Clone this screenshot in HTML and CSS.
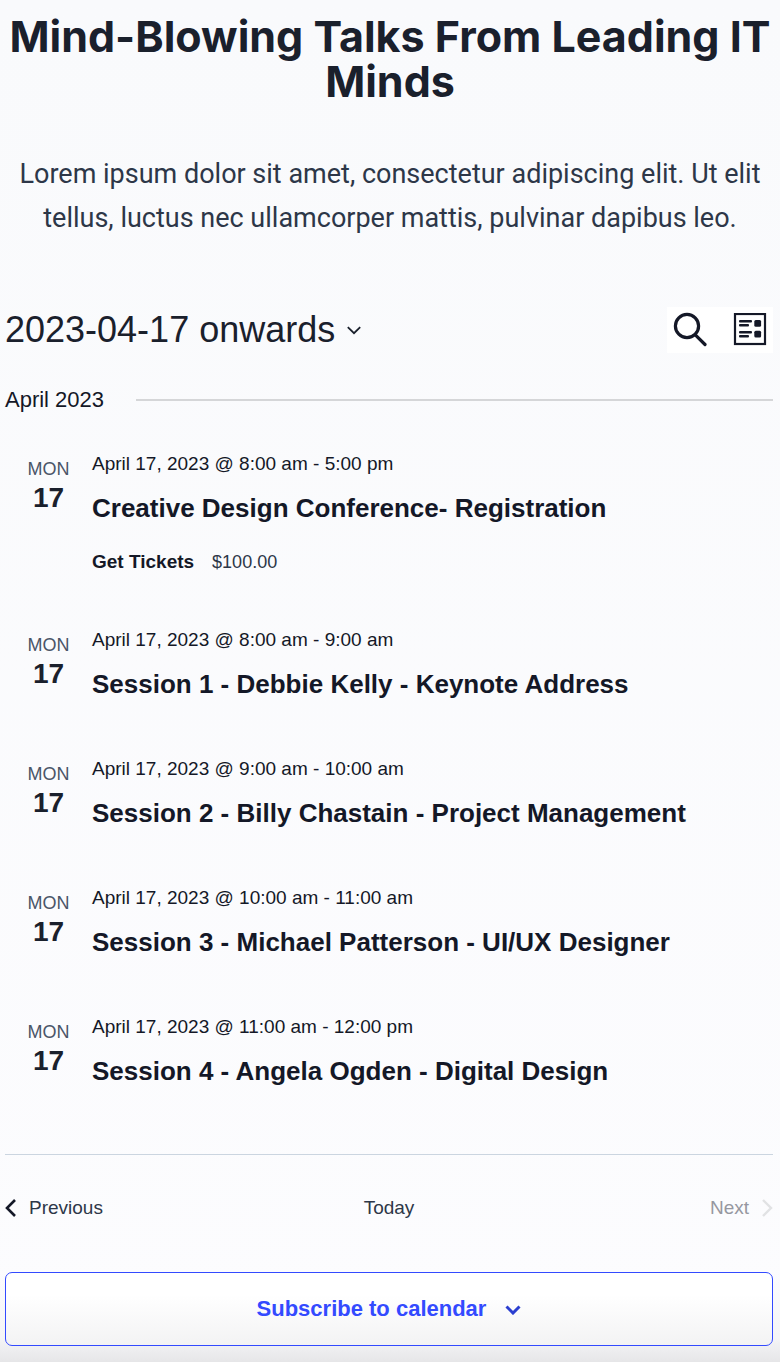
FILE: index.html
```html
<!DOCTYPE html>
<html lang="en">
    <head>
        <meta charset="UTF-8" />
        <meta name="viewport" content="width=device-width, initial-scale=1" />
        <title>Events</title>
        <link rel="stylesheet" href="styles.css">
    </head>
    <body>
        <header class="intro">
            <h1>Mind-Blowing Talks From Leading IT Minds</h1>
            <p>Lorem ipsum dolor sit amet, consectetur adipiscing elit. Ut elit tellus, luctus nec ullamcorper mattis, pulvinar dapibus leo.</p>
        </header>
        <main class="events">
            <div class="top_bar">
                <button type="button" class="datepicker">
                    2023-04-17 onwards
                    <svg width="14" height="9" viewBox="0 0 14 9" fill="none" stroke="currentColor" stroke-width="1.8"><path d="M.8 1.2L7 7.2l6.2-6"/></svg>
                </button>
                <div class="views">
                    <button type="button" class="view_button" aria-label="Search">
                        <svg width="34" height="36" viewBox="0 0 34 36" fill="none" stroke="currentColor"><circle cx="14" cy="14" r="11.6" stroke-width="3.2"/><path d="M22.3 22.8l9.7 9.7" stroke-width="3.2" stroke-linecap="round"/></svg>
                    </button>
                    <button type="button" class="view_button" aria-label="List view">
                        <svg width="34" height="34" viewBox="0 0 34 34" fill="currentColor"><rect x="2" y="1" width="30" height="30" fill="none" stroke="currentColor" stroke-width="2.2"/><rect x="6" y="7" width="13" height="2.4" rx="1"/><rect x="6" y="11" width="10" height="2.4" rx="1"/><rect x="6" y="18" width="13" height="2.4" rx="1"/><rect x="6" y="22" width="10" height="2.4" rx="1"/><rect x="21.3" y="7" width="6.8" height="6.8" rx="1.5"/><rect x="21.3" y="17.8" width="6.8" height="6.8" rx="1.5"/></svg>
                    </button>
                </div>
            </div>

            <h2 class="month">April 2023</h2>

            <article class="event">
                <div class="date_tag"><span class="weekday">MON</span><span class="day">17</span></div>
                <div class="details">
                    <time class="when">April 17, 2023 @ 8:00 am - 5:00 pm</time>
                    <h3><a href="#">Creative Design Conference- Registration</a></h3>
                    <p class="cost"><a href="#">Get Tickets</a><span>$100.00</span></p>
                </div>
            </article>
            <article class="event">
                <div class="date_tag"><span class="weekday">MON</span><span class="day">17</span></div>
                <div class="details">
                    <time class="when">April 17, 2023 @ 8:00 am - 9:00 am</time>
                    <h3><a href="#">Session 1 - Debbie Kelly - Keynote Address</a></h3>
                </div>
            </article>
            <article class="event">
                <div class="date_tag"><span class="weekday">MON</span><span class="day">17</span></div>
                <div class="details">
                    <time class="when">April 17, 2023 @ 9:00 am - 10:00 am</time>
                    <h3><a href="#">Session 2 - Billy Chastain - Project Management</a></h3>
                </div>
            </article>
            <article class="event">
                <div class="date_tag"><span class="weekday">MON</span><span class="day">17</span></div>
                <div class="details">
                    <time class="when">April 17, 2023 @ 10:00 am - 11:00 am</time>
                    <h3><a href="#">Session 3 - Michael Patterson - UI/UX Designer</a></h3>
                </div>
            </article>
            <article class="event">
                <div class="date_tag"><span class="weekday">MON</span><span class="day">17</span></div>
                <div class="details">
                    <time class="when">April 17, 2023 @ 11:00 am - 12:00 pm</time>
                    <h3><a href="#">Session 4 - Angela Ogden - Digital Design</a></h3>
                </div>
            </article>

            <nav class="pager">
                <a href="#" class="previous"><svg width="11" height="18" viewBox="0 0 11 18" fill="none" stroke="#141827" stroke-width="2.6"><path d="M10 1L2 9l8 8"/></svg>Previous</a>
                <a href="#" class="today">Today</a>
                <button type="button" class="next" disabled>Next<svg width="11" height="18" viewBox="0 0 11 18" fill="none" stroke="#e1e2e4" stroke-width="2.4"><path d="M1 1l8 8-8 8"/></svg></button>
            </nav>

            <button type="button" class="subscribe">
                Subscribe to calendar
                <svg width="16" height="11" viewBox="0 0 16 11" fill="none" stroke="#2b3fd0" stroke-width="3"><path d="M1.5 2.5L8 9l6.5-6.5"/></svg>
            </button>
        </main>
    </body>
</html>
```

FILE: styles.css
```css
* {
    box-sizing: border-box;
}
body {
    margin: 0;
    min-height: 100vh;
    /* shade along the bottom edge, over the page tint */
    background: linear-gradient(to top, #e6e6e8, rgba(240,240,242,0.6) 24px, rgba(250,250,252,0) 90px), linear-gradient(#f9fafc, #fcfcfe);
    color: #141827;
    font-family: "Helvetica Neue", "Liberation Sans", Arial, sans-serif;
}
h1, h2, h3, p {
    margin: 0;
}
a {
    color: inherit;
    text-decoration: none;
}
button {
    padding: 0;
    border: 0;
    background: none;
    color: inherit;
    font: inherit;
    cursor: pointer;
}
svg {
    display: block;
    flex: none;
}

.intro {
    padding: 14px 8px 0;
    font-family: Inter, sans-serif;
    text-align: center;
}
.intro h1 {
    color: #1a202c;
    font-size: 43px;
    font-weight: 700;
    line-height: 45px;
}
.intro p {
    margin-top: 48px;
    color: #2d3748;
    font-family: Roboto, sans-serif;
    font-size: 27px;
    line-height: 44px;
}

.events {
    padding: 67px 7px 16px 5px;
}
.top_bar {
    display: flex;
    justify-content: space-between;
    align-items: center;
}
.datepicker {
    display: flex;
    align-items: center;
    gap: 12px;
    color: #1a202c;
    font-size: 36px;
    line-height: 46px;
}
.views {
    display: flex;
    align-items: center;
    gap: 26px;
    height: 46px;
    padding: 0 6px;
    background: #fff;
}

.month {
    display: flex;
    align-items: center;
    gap: 32px;
    margin-top: 32px;
    font-size: 22px;
    font-weight: 400;
    line-height: 30px;
}
.month::after {
    content: "";
    flex: 1;
    height: 2px;
    background: #d5d6d8;
}

.event {
    display: flex;
    margin-top: 54px;
}
.month + .event {
    margin-top: 36px;
}
.date_tag {
    display: flex;
    flex-direction: column;
    align-items: center;
    width: 87px;
    padding-top: 6px;
}
.weekday {
    color: #4a5568;
    font-size: 18px;
    line-height: 24px;
}
.day {
    color: #1a202c;
    font-size: 28px;
    font-weight: bold;
    line-height: 34px;
}
.details {
    flex: 1;
}
.when {
    display: block;
    font-size: 19px;
    line-height: 26px;
}
.details h3 {
    margin-top: 13px;
    font-size: 26px;
    line-height: 36px;
}
.cost {
    display: flex;
    align-items: center;
    gap: 18px;
    margin-top: 25px;
    font-size: 18px;
    line-height: 22px;
}
.cost a {
    font-size: 19px;
    font-weight: bold;
}
.cost span {
    color: #2d3748;
}

.pager {
    display: grid;
    grid-template-columns: 1fr auto 1fr;
    align-items: center;
    margin-top: 65px;
    padding: 40px 0 51px;
    border-top: 1px solid #cbd5e0;
    color: #2d3748;
    font-size: 19px;
    line-height: 26px;
}
.previous, .next {
    display: flex;
    align-items: center;
    gap: 13px;
}
.next {
    justify-self: end;
    color: #9697a0;
    cursor: default;
}

.subscribe {
    display: flex;
    align-items: center;
    justify-content: center;
    gap: 19px;
    width: 100%;
    height: 74px;
    border: 1px solid #334aff;
    border-radius: 7px;
    background: linear-gradient(#fff 30%, #f3f3f4);
    color: #334aff;
    font-size: 22px;
    font-weight: bold;
}
```
